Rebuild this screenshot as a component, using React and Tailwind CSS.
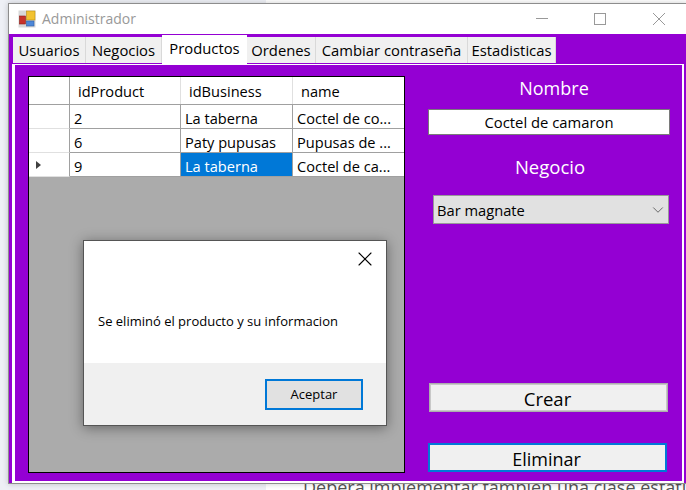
import { ChevronDown, X } from "lucide-react";

const FONT = "font-['Open_Sans','Noto_Sans',sans-serif]";

const TABS = [
  { label: "Usuarios", width: "w-[73px]" },
  { label: "Negocios", width: "w-[76px]" },
  { label: "Productos", width: "w-[85px]", active: true },
  { label: "Ordenes", width: "w-[69px]" },
  { label: "Cambiar contraseña", width: "w-[152px]" },
  { label: "Estadisticas", width: "w-[88px]" },
];

const ROWS = [
  { id: "2", business: "La taberna", name: "Coctel de co..." },
  { id: "6", business: "Paty pupusas", name: "Pupusas de ..." },
  { id: "9", business: "La taberna", name: "Coctel de ca...", current: true },
];

function AppIcon() {
  return (
    <svg width="18" height="18" viewBox="0 0 18 18" className="shrink-0">
      <rect x="0.5" y="0.5" width="17" height="17" fill="#d8d8d8" />
      <rect x="8.5" y="1" width="8.5" height="9" fill="#f2c230" stroke="#b98d10" strokeWidth="0.6" />
      <rect x="1.5" y="6" width="6" height="8" fill="#c8322a" stroke="#8a1d18" strokeWidth="0.6" />
      <rect x="8.5" y="11" width="7.5" height="5" fill="#4d87d8" stroke="#2d5ea6" strokeWidth="0.6" />
    </svg>
  );
}

function WindowButtons() {
  return (
    <div className="ml-auto flex items-center pr-[23px]">
      <svg width="12" height="12" viewBox="0 0 12 12" className="mr-[46px]">
        <path d="M0 5.5 H12" stroke="#999999" strokeWidth="1" />
      </svg>
      <svg width="12" height="12" viewBox="0 0 12 12" className="mr-[47px]">
        <rect x="0.5" y="0.5" width="11" height="11" fill="none" stroke="#999999" strokeWidth="1" />
      </svg>
      <svg width="12" height="12" viewBox="0 0 12 12">
        <path d="M0 0 L12 12 M12 0 L0 12" stroke="#999999" strokeWidth="1" />
      </svg>
    </div>
  );
}

function Dialog() {
  return (
    <div className="absolute left-[54px] top-[163px] w-[304px] h-[186px] flex flex-col border border-[#555555] bg-white shadow-[0_2px_12px_rgba(0,0,0,0.4)]">
      <div className="flex-1 relative flex items-center pl-[14px] pt-[39px]">
        <X size={24} strokeWidth={1.1} className="absolute right-[9px] top-[6px] text-black" />
        <span className="text-[13px] text-black">Se eliminó el producto y su informacion</span>
      </div>
      <div className="h-[62px] bg-[#f0f0f0] flex justify-end items-start pt-[16px] pr-[23px]">
        <button className="w-[98px] h-[31px] border-2 border-[#0078d7] bg-[#e1e1e1] text-[13px] text-black">
          Aceptar
        </button>
      </div>
    </div>
  );
}

function ProductGrid() {
  return (
    <div className="relative w-[377px] h-[397px] shrink-0 border border-black bg-[#ababab] flex flex-col text-[14.6px] text-black">
      <div className="flex h-[28px] bg-white border-b border-[#a0a0a0]">
        <div className="w-[41px] border-r border-[#a0a0a0]" />
        <div className="w-[111px] border-r border-[#e0e0e0] pl-[8px] pt-[3px] flex items-center">idProduct</div>
        <div className="w-[112px] border-r border-[#e0e0e0] pl-[8px] pt-[3px] flex items-center">idBusiness</div>
        <div className="flex-1 pl-[8px] pt-[3px] flex items-center">name</div>
      </div>
      {ROWS.map((row) => (
        <div key={row.id} className="flex h-[24px] bg-white">
          <div className="w-[41px] border-r border-b border-r-[#a0a0a0] border-b-[#e0e0e0] flex items-center pl-[7px]">
            {row.current && (
              <svg width="6" height="8" viewBox="0 0 6 8">
                <path d="M0 0 L5 4 L0 8 Z" fill="#404040" />
              </svg>
            )}
          </div>
          <div className="w-[111px] border-r border-b border-[#a0a0a0] pl-[4px] pt-[4px] flex items-center">{row.id}</div>
          <div
            className={`w-[112px] border-r border-b border-[#a0a0a0] pl-[4px] pt-[4px] flex items-center ${
              row.current ? "bg-[#0078d7] text-white" : ""
            }`}
          >
            {row.business}
          </div>
          <div className="flex-1 border-b border-[#a0a0a0] pl-[4px] pt-[4px] flex items-center whitespace-nowrap">
            {row.name}
          </div>
        </div>
      ))}
      <Dialog />
    </div>
  );
}

function SidePanel() {
  return (
    <div className="ml-[23px] w-[242px] shrink-0 flex flex-col text-black">
      <div className="h-[33px] pl-[10px] text-center text-[18px] leading-[24px] text-white">Nombre</div>
      <div className="h-[26px] border border-[#7a7a7a] bg-white flex items-center justify-center text-[14.8px]">
        Coctel de camaron
      </div>
      <div className="mt-[20px] h-[40px] pl-[2px] text-center text-[18.5px] leading-[24px] text-white">Negocio</div>
      <div className="ml-[5px] w-[236px] h-[29px] border border-[#999999] bg-[#e1e1e1] flex items-center justify-between pl-[3px] pr-[1px] text-[14.7px]">
        <span className="pt-[2px]">Bar magnate</span>
        <ChevronDown size={18} strokeWidth={1.1} className="text-[#505050]" />
      </div>
      <button className="mt-[159px] ml-[1px] w-[239px] h-[29px] border-2 border-[#c8c8c8] outline outline-1 -outline-offset-1 outline-[#adadad] bg-[#f0f0f0] text-[18.5px] leading-[24px] pt-[2px] pr-[2px]">
        Crear
      </button>
      <button className="mt-[31px] w-[239px] h-[29px] border-2 border-[#0078d7] bg-[#f0f0f0] text-[18px] leading-[24px] pt-[2px] pr-[2px]">
        Eliminar
      </button>
    </div>
  );
}

export default function App() {
  return (
    <div className={`relative w-[686px] h-[490px] overflow-hidden bg-white ${FONT}`}>
      {/* documento de fondo que asoma detras de la ventana */}
      <div className="absolute inset-y-0 left-0 w-[266px] bg-[#eef0f6]" />
      <div className="absolute left-[320px] -top-[23px] text-[21px] font-bold text-[#333333]">etra</div>
      <div className="absolute left-[440px] -top-[20px] whitespace-nowrap text-[16px] text-[#444444]">
        de clasificación
      </div>
      <div className="absolute left-[303px] top-[478px] whitespace-nowrap text-[18px] leading-none text-[#555555]">
        Deberá implementar también una clase estática
      </div>

      <div className="relative ml-[8px] mt-[3px] w-[680px] h-[481px] border-l border-t border-b border-[#8d8d8d] bg-white flex flex-col shadow-[0_0_6px_rgba(0,0,0,0.2)]">
        <div className="h-[30px] flex items-center pl-[9px] pb-[1px] bg-white shrink-0">
          <AppIcon />
          <span className="ml-[6px] text-[14px] text-[#999999]">Administrador</span>
          <WindowButtons />
        </div>

        <div className="flex-1 bg-[#9400d3] flex flex-col pl-[3px] pr-[4px]">
          <div className="h-[30px] flex items-end pl-[1px] shrink-0">
            {TABS.map((tab) => (
              <div
                key={tab.label}
                className={`flex items-center justify-center text-[14.8px] text-black ${tab.width} ${
                  tab.active
                    ? "h-[29px] bg-white pb-[2px]"
                    : "h-[26px] mb-[1px] bg-[#f0f0f0] border-r border-[#d9d9d9]"
                }`}
              >
                {tab.label}
              </div>
            ))}
          </div>
          <div className="flex-1 border-l-[3px] border-r-[2px] border-t border-b-[2px] border-white flex pl-[13px] pt-[11px]">
            <ProductGrid />
            <SidePanel />
          </div>
        </div>
      </div>
    </div>
  );
}
